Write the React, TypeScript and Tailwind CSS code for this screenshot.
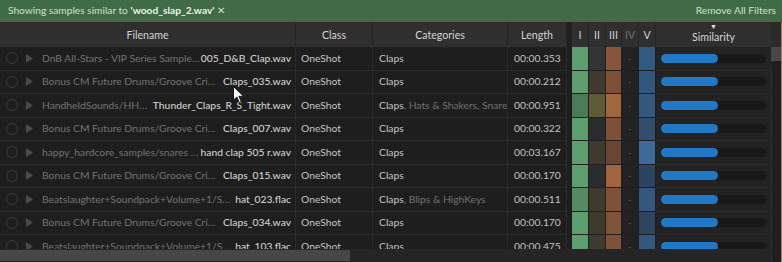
import React from "react";

type Row = {
  path: string;
  file: string;
  cats: string;
  more?: string;
  length: string;
  c: [string, string, string, string];
};

const rows: Row[] = [
  { path: "DnB All-Stars - VIP Series Sample Pack/Drums/Claps", file: "005_D&B_Clap.wav", cats: "Claps", length: "00:00.353", c: ["#5c9e6e", "#333434", "#87553a", "#305a80"] },
  { path: "Bonus CM Future Drums/Groove Criminals/Claps", file: "Claps_035.wav", cats: "Claps", length: "00:00.212", c: ["#5c9e6e", "#3f3a30", "#7f5038", "#30587e"] },
  { path: "HandheldSounds/HHS - Drums/Claps", file: "Thunder_Claps_R_S_Tight.wav", cats: "Claps", more: ", Hats & Shakers, Snares", length: "00:00.951", c: ["#4a7a57", "#5e5a36", "#a0673d", "#34587a"] },
  { path: "Bonus CM Future Drums/Groove Criminals/Claps", file: "Claps_007.wav", cats: "Claps", length: "00:00.322", c: ["#5c9e6e", "#2a2d2e", "#7f5036", "#2f4f6c"] },
  { path: "happy_hardcore_samples/snares and claps", file: "hand clap 505 r.wav", cats: "Claps", length: "00:03.167", c: ["#5c9e6e", "#3f3a30", "#6a4631", "#3e6a9a"] },
  { path: "Bonus CM Future Drums/Groove Criminals/Claps", file: "Claps_015.wav", cats: "Claps", length: "00:00.170", c: ["#5c9e6e", "#2a2d2e", "#a0653f", "#2b4560"] },
  { path: "Beatslaughter+Soundpack+Volume+1/Samples/Hats", file: "hat_023.flac", cats: "Claps", more: ", Blips & HighKeys", length: "00:00.511", c: ["#558b64", "#3e3a2e", "#7e5238", "#34587d"] },
  { path: "Bonus CM Future Drums/Groove Criminals/Claps", file: "Claps_034.wav", cats: "Claps", length: "00:00.170", c: ["#5c9e6e", "#3e3a2e", "#7e5438", "#2d455e"] },
  { path: "Beatslaughter+Soundpack+Volume+1/Samples/Hats", file: "hat_103.flac", cats: "Claps", length: "00:00.475", c: ["#5c9e6e", "#3e3a2e", "#7e5238", "#34587d"] },
];

const cols =
  "grid grid-cols-[296px_77px_135px_59px_5px_17px_17px_16px_17px_17px_1fr]";

function HeaderCell({ children, dim }: { children?: React.ReactNode; dim?: boolean }) {
  return (
    <div
      className={`flex items-center justify-center border-r border-[#252525] pt-[2px] ${
        dim ? "text-[#6f6f6f]" : "text-[#d4d4d4]"
      }`}
    >
      {children}
    </div>
  );
}

export default function App() {
  return (
    <div className="relative flex h-[262px] w-[782px] flex-col overflow-hidden bg-[#1e1e1e] font-['Lato',sans-serif] text-[10.3px]">
      <div className="flex h-[22px] shrink-0 items-center justify-between bg-[#416b46] pl-[8px] pr-[6px] text-[10.2px] text-[#cfe0cf]">
        <div>
          Showing samples similar to{" "}
          <span className="font-bold text-[#eef4ee]">'wood_slap_2.wav'</span>
          <span className="ml-[2px] font-light">✕</span>
        </div>
        <div>Remove All Filters</div>
      </div>

      <div className="flex min-h-0 flex-1">
        <div className="flex w-[771px] flex-col">
          <div className={`${cols} h-[25px] shrink-0 bg-[#2f2f2f] text-[10.6px]`}>
            <HeaderCell>Filename</HeaderCell>
            <HeaderCell>Class</HeaderCell>
            <HeaderCell>Categories</HeaderCell>
            <HeaderCell>Length</HeaderCell>
            <div className="border-r border-[#252525] bg-[#1f1f1f]" />
            <HeaderCell>I</HeaderCell>
            <HeaderCell>II</HeaderCell>
            <HeaderCell>III</HeaderCell>
            <HeaderCell dim>IV</HeaderCell>
            <HeaderCell>V</HeaderCell>
            <div className="relative flex items-center justify-center pt-[7px] text-[#d4d4d4]">
              <span className="absolute left-1/2 top-[1px] -translate-x-1/2 text-[7px] leading-none text-[#e0e0e0]">
                ▼
              </span>
              Similarity
            </div>
          </div>

          <div className="min-h-0 flex-1 overflow-hidden">
            {rows.map((r) => (
              <div key={r.file} className={`${cols} h-[23.5px] text-[#c4c4c4]`}>
                <div className="flex min-w-0 items-center border-b border-r border-[#2a2a2a] pr-[4px]">
                  <span className="ml-[6px] h-[12px] w-[12px] shrink-0 rounded-full border border-[#3c3c3c]" />
                  <svg className="ml-[8px] shrink-0" width="7" height="9" viewBox="0 0 7 9">
                    <path d="M0 0L7 4.5L0 9Z" fill="#4a4a4a" />
                  </svg>
                  <span className="ml-[9px] min-w-0 flex-1 truncate text-[#727272]">{r.path}</span>
                  <span className="ml-[1px] shrink-0 font-medium text-[#d0d0d0]">{r.file}</span>
                </div>
                <div className="flex items-center border-b border-r border-[#2a2a2a] pl-[5px]">OneShot</div>
                <div className="flex items-center overflow-hidden whitespace-nowrap border-b border-r border-[#2a2a2a] pl-[6px]">
                  {r.cats}
                  {r.more && <span className="text-[#6f6f6f]">{r.more}</span>}
                </div>
                <div className="flex items-center border-b border-r border-[#2a2a2a] pl-[6px]">{r.length}</div>
                <div className="border-r border-[#1a1a1a] bg-[#1e1e1e]" />
                <div className="border-b border-r border-[#1e1e1e]" style={{ backgroundColor: r.c[0] }} />
                <div className="border-b border-r border-[#1e1e1e]" style={{ backgroundColor: r.c[1] }} />
                <div className="border-b border-r border-[#1e1e1e]" style={{ backgroundColor: r.c[2] }} />
                <div className="flex items-center justify-center border-b border-r border-[#1e1e1e] bg-[#222222] text-[9px] text-[#555]">
                  -
                </div>
                <div className="border-b border-r border-[#1e1e1e]" style={{ backgroundColor: r.c[3] }} />
                <div className="flex items-center border-b border-[#2a2a2a] bg-[#232323] pl-[5px] pr-[5px]">
                  <div className="h-[9px] flex-1 rounded-full bg-[#181818]">
                    <div className="h-full w-[57px] rounded-full bg-[#2179c6]" />
                  </div>
                </div>
              </div>
            ))}
          </div>

          <div className="h-[13px] shrink-0 bg-[#252525] pt-[1px]">
            <div className="h-[11px] w-[350px] bg-[#474747]" />
          </div>
        </div>

        <div className="flex w-[11px] flex-col border-r border-[#a97f4c]">
          <div className="h-[25px] bg-[#2b2b2b]" />
          <div className="h-[14px] bg-[#484848]" />
          <div className="flex-1 border-l border-[#2c2c2c] bg-[#1f1f1f]" />
        </div>
      </div>

      <svg className="absolute left-[233px] top-[86px]" width="12" height="18" viewBox="0 0 12 18">
        <path d="M0.5 0.5L0.5 14L3.8 11L6.3 16.5L8.3 15.6L5.9 10.3L10.5 10.3Z" fill="#ffffff" stroke="#1a1a1a" strokeWidth="1" />
      </svg>
    </div>
  );
}
